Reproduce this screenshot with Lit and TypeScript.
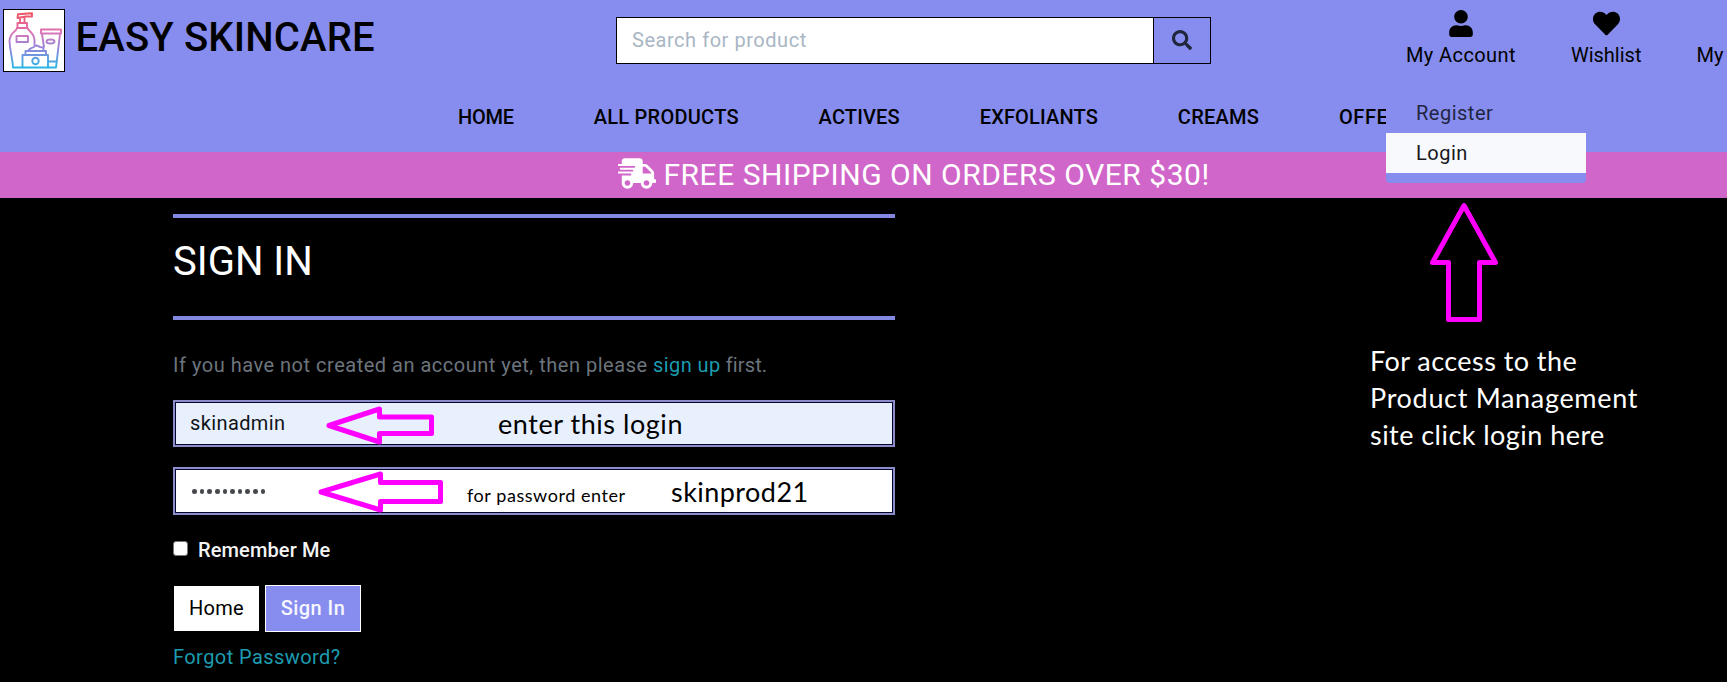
import { LitElement, html, css, svg } from "lit";
import { customElement } from "lit/decorators.js";

const ICONS = {
  user: {
    box: "0 0 448 512",
    d: "M224 256c70.7 0 128-57.3 128-128S294.7 0 224 0 96 57.3 96 128s57.3 128 128 128zm89.6 32h-16.7c-22.2 10.2-46.9 16-72.9 16s-50.6-5.8-72.9-16h-16.7C60.2 288 0 348.2 0 422.4V464c0 26.5 21.5 48 48 48h352c26.5 0 48-21.5 48-48v-41.6c0-74.2-60.2-134.4-134.4-134.4z",
  },
  heart: {
    box: "0 0 512 512",
    d: "M462.3 62.6C407.5 15.9 326 24.3 275.7 76.2L256 96.5l-19.7-20.3C186.1 24.3 104.5 15.9 49.7 62.6c-62.8 53.6-66.1 149.8-9.9 207.9l193.5 199.8c12.5 12.9 32.8 12.9 45.3 0l193.5-199.8c56.3-58.1 53-154.3-9.8-207.9z",
  },
  search: {
    box: "0 0 512 512",
    d: "M505 442.7L405.3 343c-4.5-4.5-10.6-7-17-7H372c27.6-35.3 44-79.7 44-128C416 93.1 322.9 0 208 0S0 93.1 0 208s93.1 208 208 208c48.3 0 92.7-16.4 128-44v16.3c0 6.4 2.5 12.5 7 17l99.7 99.7c9.4 9.4 24.6 9.4 33.9 0l28.3-28.3c9.4-9.4 9.4-24.6.1-34zM208 336c-70.7 0-128-57.2-128-128 0-70.7 57.2-128 128-128 70.7 0 128 57.2 128 128 0 70.7-57.2 128-128 128z",
  },
  truck: {
    box: "0 0 640 512",
    d: "M624 352h-16V243.9c0-12.7-5.1-24.9-14.1-33.9L494 110.1c-9-9-21.2-14.1-33.9-14.1H416V48c0-26.5-21.5-48-48-48H112C85.5 0 64 21.5 64 48v48H8c-4.4 0-8 3.6-8 8v16c0 4.4 3.6 8 8 8h272c4.4 0 8 3.6 8 8v16c0 4.4-3.6 8-8 8H40c-4.4 0-8 3.6-8 8v16c0 4.4 3.6 8 8 8h208c4.4 0 8 3.6 8 8v16c0 4.4-3.6 8-8 8H8c-4.4 0-8 3.6-8 8v16c0 4.4 3.6 8 8 8h208c4.4 0 8 3.6 8 8v16c0 4.4-3.6 8-8 8H64v128c0 53 43 96 96 96s96-43 96-96h128c0 53 43 96 96 96s96-43 96-96h48c8.8 0 16-7.2 16-16v-32c0-8.8-7.2-16-16-16zM160 464c-26.5 0-48-21.5-48-48s21.5-48 48-48 48 21.5 48 48-21.5 48-48 48zm320 0c-26.5 0-48-21.5-48-48s21.5-48 48-48 48 21.5 48 48-21.5 48-48 48zm80-208H416V144h44.1l99.9 99.9V256z",
  },
};

const icon = (name: keyof typeof ICONS) => html`
  <svg class="icon ${name}" viewBox=${ICONS[name].box} fill="currentColor" aria-hidden="true">
    ${svg`<path d=${ICONS[name].d}></path>`}
  </svg>`;

@customElement("site-header")
class SiteHeader extends LitElement {
  static styles = css`
    :host { display: block; background: #868dee; color: #000; }
    .icon { display: block; }
    .top { display: flex; height: 84px; }
    .brand { display: flex; align-items: flex-start; width: 616px; padding-left: 3px; box-sizing: border-box; }
    .logo { display: block; width: 60px; height: 61px; margin-top: 9px; border: 1px solid #000; background: #fff; }
    .name { margin: 14px 0 0 10.5px; font-size: 40px; line-height: 48px; font-weight: 500; letter-spacing: 0.15px; white-space: nowrap; }
    .searchbar { display: flex; width: 595px; height: 47px; margin-top: 17px; box-sizing: border-box; border: 1px solid #000; }
    .query { flex: 1; min-width: 0; border: 0; padding: 0 15px 1px; background: #fff; font: 400 20px Roboto, sans-serif; letter-spacing: 0.54px; outline: none; }
    .query::placeholder { color: #a9b6c4; opacity: 1; }
    .go { width: 57px; border: 0; border-left: 1px solid #000; padding: 0 1px 0 0; background: #868dee; color: #20263b; display: flex; align-items: center; justify-content: center; }
    .search { width: 20px; height: 20px; margin-top: -2px; }
    .actions { display: flex; padding: 10px 0 0 195px; gap: 55px; font-size: 20px; line-height: 30px; white-space: nowrap; }
    .action { display: flex; flex-direction: column; align-items: center; position: relative; gap: 3px; }
    .account { letter-spacing: 0.4px; }
    .bag { padding-top: 30px; }
    .user { width: 24px; height: 27px; }
    .heart { width: 27px; height: 27px; }
    .menu { position: absolute; z-index: 2; left: -20px; top: 73px; width: 200px; box-sizing: border-box; padding: 10px 0; background: #868dee; border-radius: 0 0 4px 4px; }
    .option { height: 40px; line-height: 40px; padding-left: 30px; color: #212542; letter-spacing: 0.5px; }
    .option.on { background: #f8f9fc; color: #16181b; }
    nav { display: flex; height: 68px; box-sizing: border-box; padding: 18px 0 0 458px; gap: 79.8px; font-size: 20px; line-height: 30px; font-weight: 500; white-space: nowrap; }
    .tight { letter-spacing: -0.2px; }
    .wide { letter-spacing: 0.25px; }
    .mid { letter-spacing: 0.17px; }
    .offer { letter-spacing: 0.6px; }
  `;
  render() {
    return html`
      <div class="top">
        <div class="brand">
          <svg class="logo" viewBox="0 0 60 61" fill="none" stroke="url(#g)" stroke-width="1.9" stroke-linejoin="round" stroke-linecap="round">
            <defs>
              <linearGradient id="g" gradientUnits="userSpaceOnUse" x1="0" y1="3" x2="0" y2="58">
                <stop offset="0" stop-color="#ef5360"></stop>
                <stop offset=".35" stop-color="#dc74b8"></stop>
                <stop offset=".65" stop-color="#8f87dc"></stop>
                <stop offset="1" stop-color="#28b6e4"></stop>
              </linearGradient>
            </defs>
            <path d="M14 4.2L28 3.2V6.5H22L13.5 8zM16 7.5V13M20.5 7.5V13M13.5 13H23V18H13.5z"></path>
            <path d="M13 18H23.5C24 21 30 22 30.5 30V35M13 18C12.500 22 6 21.500 5.500 31C6 42 8.500 47 9 57.500H18"></path>
            <path d="M12.500 26H24V32H12.500z"></path>
            <path d="M37 19.500H57V23.500H37zM38 24L40 37M56 24L52 57.500H44"></path>
            <ellipse cx="46.500" cy="31.500" rx="4" ry="2"></ellipse>
            <path d="M18.500 57.500V45H44V57.500zM21.500 44.500V41H42V44.500M24.500 40.500C26 37.500 29 38.500 31 36C33 34.500 34 36.500 36 37C39 37 40 38 39.500 40.500M44 51.500H52.500"></path>
            <circle cx="31.500" cy="51" r="3.200"></circle>
          </svg>
          <div class="name">EASY SKINCARE</div>
        </div>
        <div class="searchbar">
          <input class="query" type="text" placeholder="Search for product" />
          <button class="go" aria-label="Search">${icon("search")}</button>
        </div>
        <div class="actions">
          <div class="action account">
            ${icon("user")}<span>My Account</span>
            <div class="menu">
              <div class="option">Register</div>
              <div class="option on">Login</div>
            </div>
          </div>
          <div class="action">${icon("heart")}<span>Wishlist</span></div>
          <div class="action bag"><span>My</span></div>
        </div>
      </div>
      <nav>
        <span class="tight">HOME</span>
        <span class="wide">ALL PRODUCTS</span>
        <span class="mid">ACTIVES</span>
        <span class="mid">EXFOLIANTS</span>
        <span class="wide">CREAMS</span>
        <span class="offer">OFFERS</span>
      </nav>`;
  }
}

@customElement("shipping-banner")
class ShippingBanner extends LitElement {
  static styles = css`
    :host { display: flex; height: 46px; align-items: center; gap: 7.500px; padding-left: 618px; background: #d066c9; color: #fff; font-size: 30px; line-height: 36px; white-space: nowrap; letter-spacing: 0.52px; }
    .truck { display: block; width: 38px; height: 31px; margin-top: -3px; }
  `;
  render() {
    return html`${icon("truck")}<span>FREE SHIPPING ON ORDERS OVER $30!</span>`;
  }
}

@customElement("sign-in-form")
class SignInForm extends LitElement {
  static styles = css`
    :host { display: block; width: 722px; font-size: 20px; line-height: 30px; white-space: nowrap; }
    .rule { height: 4px; background: #8388e0; }
    h1 { margin: 0; padding: 20px 0 30px; font-size: 40px; line-height: 48px; font-weight: 400; letter-spacing: 0; }
    .hint { margin: 30px 0 20px; color: #6c757d; letter-spacing: 0.51px; }
    .end { letter-spacing: 0.1px; }
    .link { color: #1c9cb0; letter-spacing: 0.43px; }
    .field { display: flex; align-items: center; box-sizing: border-box; height: 47px; border: 2px solid #8b8cca; box-shadow: inset 0 0 0 1px #05052c; padding-left: 15px; background: #fff; color: #101418; }
    .field.filled { background: #e8f0fe; }
    .field.secret { height: 48px; margin-top: 20px; }
    .value { width: 136px; margin-top: -2px; letter-spacing: 0.38px; }
    .dots { display: flex; gap: 3.050px; width: 127px; margin-top: 1px; padding-left: 2px; }
    .dot { width: 4.600px; height: 4.600px; border-radius: 50%; background: #45484d; }
    .arrow { display: block; flex: none; height: 43px; overflow: visible; fill: none; stroke: #ff00ff; stroke-width: 5; stroke-linejoin: round; }
    .long { height: 44px; }
    .note { font-family: Lato, sans-serif; font-size: 27px; line-height: 32px; color: #000; letter-spacing: 0.55px; }
    .login { margin-left: 64px; }
    .small { margin: 8px 0 0 26px; font-size: 18px; letter-spacing: 0.56px; width: 204px; }
    .pass { margin-top: 2px; letter-spacing: 0.45px; }
    .remember { display: flex; margin-top: 20px; font-weight: 500; color: #f4f4f4; letter-spacing: 0.12px; }
    .box { width: 14.500px; height: 15px; box-sizing: border-box; margin: 6px 10.500px 0 0; border: 1px solid #767676; border-radius: 3px; background: #fff; }
    .buttons { display: flex; gap: 5px; margin-top: 20px; }
    .btn { box-sizing: border-box; height: 47px; line-height: 45px; border: 1px solid #000; background: #fff; color: #000; text-align: center; width: 87px; letter-spacing: 0.26px; }
    .btn.main { width: 96px; border-color: #fff; background: #868dee; color: #f6f7ff; font-weight: 500; letter-spacing: 0.45px; }
    .forgot { display: block; margin-top: 10px; }
  `;
  render() {
    return html`
      <div class="rule"></div>
      <h1>SIGN IN</h1>
      <div class="rule"></div>
      <p class="hint">If you have not created an account yet, then please <a class="link">sign up</a><span class="end"> first.</span></p>
      <div class="field filled">
        <span class="value">skinadmin</span>
        <svg class="arrow" width="108" viewBox="326 402 108 43">
          <path d="M329 425.500L379.500 409V417H431.500V433.500H379.500V442z"></path>
        </svg>
        <span class="note login">enter this login</span>
      </div>
      <div class="field secret">
        <span class="dots">${Array.from({ length: 10 }, () => html`<i class="dot"></i>`)}</span>
        <svg class="arrow long" width="122" viewBox="319 469 122 44">
          <path d="M321 492L380.500 474V482.500H440.500V501.500H380.500V510z"></path>
        </svg>
        <span class="note small">for password enter</span>
        <span class="note pass">skinprod21</span>
      </div>
      <div class="remember"><i class="box"></i>Remember Me</div>
      <div class="buttons"><span class="btn">Home</span><span class="btn main">Sign In</span></div>
      <a class="link forgot">Forgot Password?</a>`;
  }
}

@customElement("app-root")
class AppRoot extends LitElement {
  static styles = css`
    :host { display: block; width: 100%; height: 682px; overflow: hidden; background: #000; color: #fff; font-family: Roboto, sans-serif; }
    .content { display: grid; grid-template-columns: 722px 1fr; column-gap: 475px; padding: 16px 0 0 173px; }
    .guide { font-family: Lato, sans-serif; font-size: 27px; line-height: 37px; white-space: nowrap; }
    .up { display: block; margin: -12px 0 0 58px; fill: none; stroke: #ff00ff; stroke-width: 5; stroke-linejoin: round; }
    .lines { margin-top: 17px; }
    .a { letter-spacing: 0.44px; }
    .b { letter-spacing: 0.68px; }
    .c { letter-spacing: 0.46px; }
  `;
  render() {
    return html`
      <site-header></site-header>
      <shipping-banner></shipping-banner>
      <div class="content">
        <sign-in-form></sign-in-form>
        <aside class="guide">
          <svg class="up" width="74" height="123" viewBox="1428 202 74 123">
            <path d="M1464 205.500L1495.500 262.500H1479.500V319.500H1448.500V262.500H1432.500z"></path>
          </svg>
          <div class="lines">
            <div class="a">For access to the</div>
            <div class="b">Product Management</div>
            <div class="c">site click login here</div>
          </div>
        </aside>
      </div>`;
  }
}
